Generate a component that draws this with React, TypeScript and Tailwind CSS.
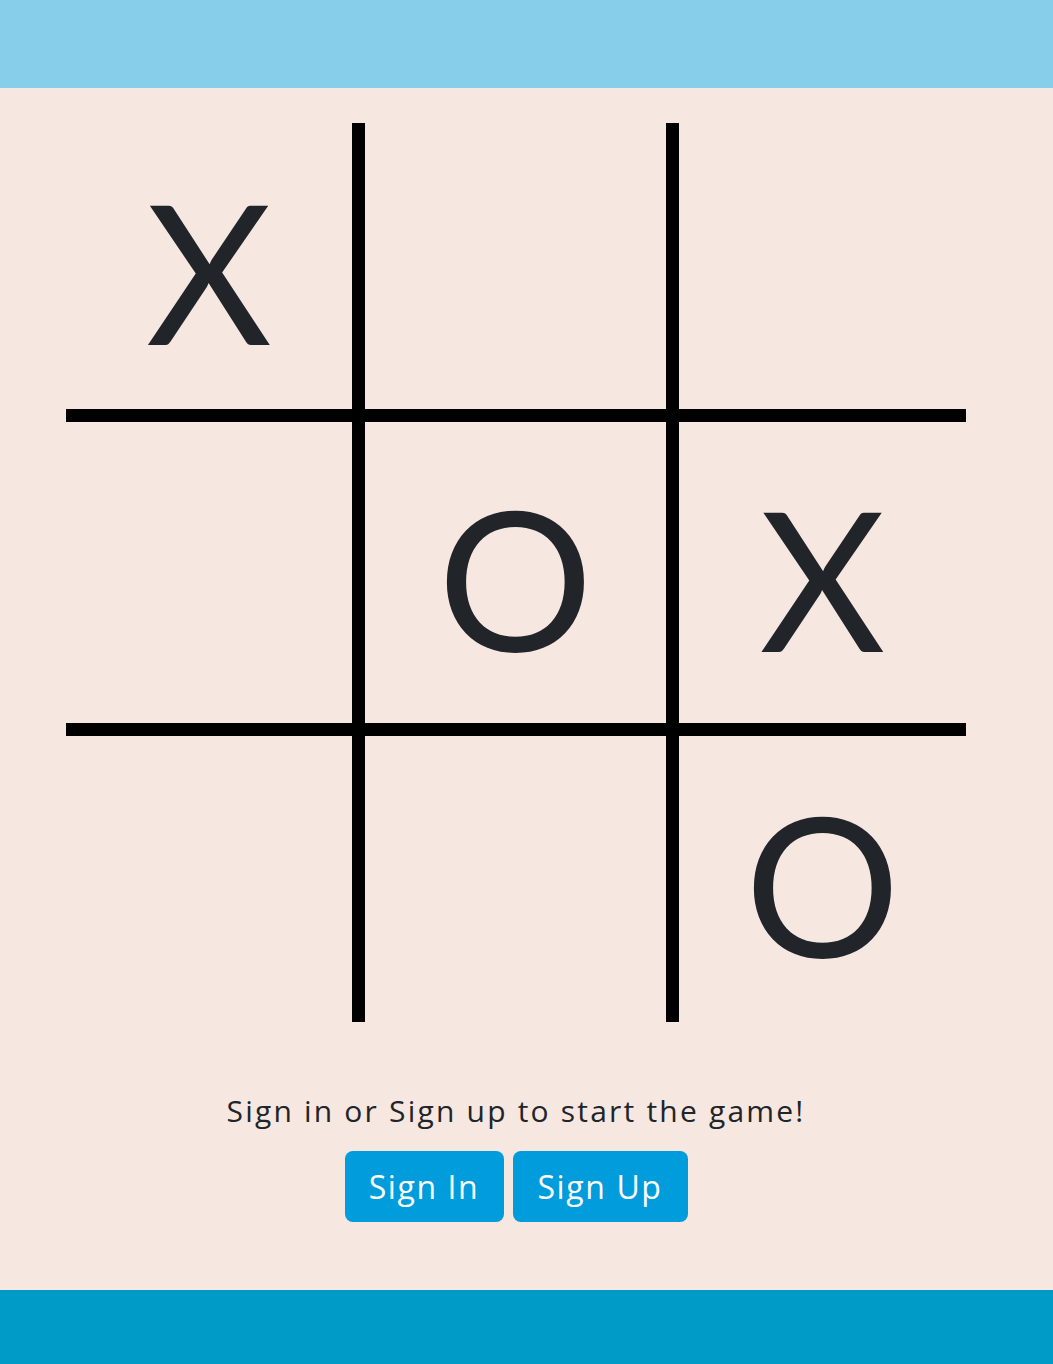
const board: string[] = ['X', '', '', '', 'O', 'X', '', '', 'O'];

function Cell({ mark }: { mark: string }): JSX.Element {
  return (
    <div className="flex items-center justify-center bg-[#f6e7e0] font-['Lato',_sans-serif] text-[194px] leading-none text-[#212529]">
      <span className="translate-y-[4px]">{mark}</span>
    </div>
  );
}

export default function App(): JSX.Element {
  return (
    <div className="flex min-h-[1364px] flex-col bg-[#f6e7e0] font-['Open_Sans',_'Lato',_sans-serif] text-[#212529]">
      <header className="h-[88px] bg-[#87ceeb]" />

      <main className="flex flex-1 flex-col items-center pr-[21px] pt-[35px]">
        {/* игровое поле: фон сетки чёрный, зазоры между клетками дают линии */}
        <div className="grid grid-cols-[286px_301px_287px] grid-rows-[286px_301px_286px] gap-[13px] bg-black">
          {board.map((mark, i) => (
            <Cell key={i} mark={mark} />
          ))}
        </div>

        <p className="mt-[66px] text-[30px] leading-[45px] tracking-[2.2px]">
          Sign in or Sign up to start the game!
        </p>

        <div className="mt-[18px] flex gap-[9px]">
          <button className="h-[71px] w-[159px] rounded-[8px] bg-[#009cdc] text-[32px] tracking-[1.6px] text-white">
            Sign In
          </button>
          <button className="h-[71px] w-[175px] rounded-[8px] bg-[#009cdc] text-[32px] tracking-[1.6px] text-white">
            Sign Up
          </button>
        </div>
      </main>

      <footer className="h-[74px] bg-[#009bc7]" />
    </div>
  );
}
